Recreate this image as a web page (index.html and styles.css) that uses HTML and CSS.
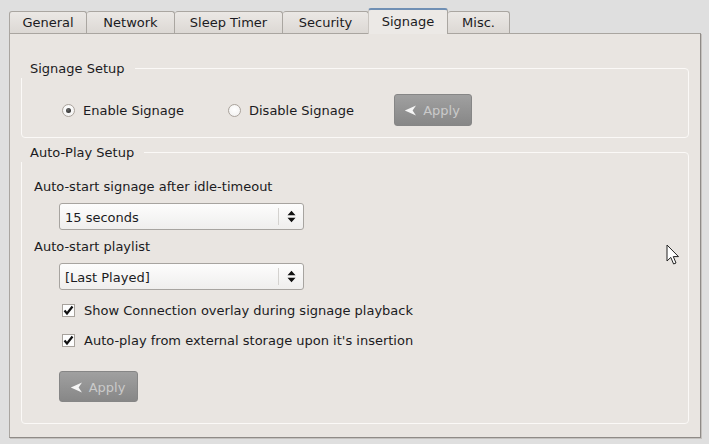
FILE: index.html
```html
<!DOCTYPE html>
<html>
<head>
<meta charset="utf-8">
<link rel="stylesheet" href="styles.css">
</head>
<body>
<div class="window">
  <div class="tabs">
    <div class="tab t-general">General</div>
    <div class="tab t-network">Network</div>
    <div class="tab t-sleep">Sleep Timer</div>
    <div class="tab t-security">Security</div>
    <div class="tab t-signage active">Signage</div>
    <div class="tab t-misc">Misc.</div>
  </div>
  <div class="panel">
    <div class="group g1">
      <div class="gtitle">Signage Setup</div>
      <div class="radio-row">
        <label class="radio r-enable"><span class="rb checked"></span>Enable Signage</label>
        <label class="radio r-disable"><span class="rb"></span>Disable Signage</label>
        <button class="apply apply-top"><svg class="arr" width="13" height="11" viewBox="0 0 13 11"><path d="M12 0.6 L0.8 5.5 L12 10.4 L8.6 5.5 Z" fill="#f6f6f6"/></svg>Apply</button>
      </div>
    </div>
    <div class="group g2">
      <div class="gtitle">Auto-Play Setup</div>
      <div class="flabel l1">Auto-start signage after idle-timeout</div>
      <div class="select s1"><span class="sval">15 seconds</span><span class="sarrow"><svg width="9" height="13" viewBox="0 0 9 13"><path d="M4.5 0.8 L8.5 5.2 L0.5 5.2 Z M0.5 7.8 L8.5 7.8 L4.5 12.2 Z" fill="#111"/></svg></span></div>
      <div class="flabel l2">Auto-start playlist</div>
      <div class="select s2"><span class="sval">[Last Played]</span><span class="sarrow"><svg width="9" height="13" viewBox="0 0 9 13"><path d="M4.5 0.8 L8.5 5.2 L0.5 5.2 Z M0.5 7.8 L8.5 7.8 L4.5 12.2 Z" fill="#111"/></svg></span></div>
      <label class="check c1"><span class="cb"><svg width="11" height="11" viewBox="0 0 11 11"><path d="M1.5 5.5 L4 8.5 L9.5 1.5" stroke="#111" stroke-width="2.2" fill="none"/></svg></span>Show Connection overlay during signage playback</label>
      <label class="check c2"><span class="cb"><svg width="11" height="11" viewBox="0 0 11 11"><path d="M1.5 5.5 L4 8.5 L9.5 1.5" stroke="#111" stroke-width="2.2" fill="none"/></svg></span>Auto-play from external storage upon it's insertion</label>
      <button class="apply apply-bottom"><svg class="arr" width="13" height="11" viewBox="0 0 13 11"><path d="M12 0.6 L0.8 5.5 L12 10.4 L8.6 5.5 Z" fill="#f6f6f6"/></svg>Apply</button>
    </div>
  </div>
  <svg class="cursor" width="14" height="22" viewBox="0 0 14 22"><path d="M1 1 L1 17 L4.8 13.4 L7.6 20 L10 19 L7.3 12.6 L12.5 12.6 Z" fill="#fff" stroke="#222" stroke-width="1"/></svg>
</div>
</body>
</html>
```

FILE: styles.css
```css
html, body {
  margin: 0;
  padding: 0;
  background: #dfdfdf;
}
body {
  font-family: "DejaVu Sans", Verdana, sans-serif;
  font-size: 13px;
  color: #1b1b22;
}
.window {
  width: 709px;
  height: 444px;
  padding: 8px 0 0 9px;
  box-sizing: border-box;
  position: relative;
}
.tabs {
  display: flex;
  align-items: flex-end;
  height: 25px;
  position: relative;
  z-index: 2;
}
.tab {
  height: 22px;
  line-height: 22px;
  box-sizing: border-box;
  text-align: center;
  border: 1px solid #aaa6a1;
  border-bottom: none;
  border-left: none;
  border-radius: 3px 3px 0 0;
  background: linear-gradient(#ebe8e5, #dcd8d4);
}
.t-general { width: 78px; border-left: 1px solid #aaa6a1; }
.t-network { width: 88px; }
.t-sleep { width: 108px; }
.t-security { width: 86px; }
.t-signage { width: 80px; }
.t-misc { width: 62px; }
.tab.active {
  height: 26px;
  line-height: 23px;
  margin-bottom: -1px;
  background: #ece9e6;
  border-top: 2px solid #6f8fb4;
  border-left: 1px solid #c9c5c0;
  border-right: 1px solid #aaa6a1;
  margin-left: -1px;
}
.panel {
  width: 692px;
  height: 405px;
  box-sizing: border-box;
  background: #e9e5e1;
  border: 1px solid #a9a5a0;
  border-right-color: #8f8b87;
  border-bottom-color: #8f8b87;
  box-shadow: 1px 1px 0 #c4c1be;
  padding: 34px 11px 0 11px;
  position: relative;
  z-index: 1;
}
.group {
  border: 1px solid #fbf9f7;
  border-radius: 4px;
}
.gtitle {
  width: fit-content;
  margin: -10px 0 0 -1px;
  padding: 0 10px 0 9px;
  line-height: 19px;
  height: 19px;
  background: #e9e5e1;
}
.g1 {
  height: 70px;
  box-sizing: border-box;
}
.radio-row {
  display: flex;
  align-items: center;
  height: 32px;
  margin-top: 16px;
  padding-left: 40px;
}
.radio {
  display: flex;
  align-items: center;
  line-height: 18px;
  padding-top: 1px;
}
.r-enable { width: 166px; }
.r-disable { width: 166px; }
.rb {
  width: 13px;
  height: 13px;
  box-sizing: border-box;
  border-radius: 50%;
  border: 1px solid #aaa39c;
  background: radial-gradient(circle at 50% 40%, #ffffff, #f0efee);
  margin-right: 8px;
  position: relative;
  flex-shrink: 0;
}
.rb.checked::after {
  content: "";
  position: absolute;
  left: 3px;
  top: 3px;
  width: 5px;
  height: 5px;
  border-radius: 50%;
  background: radial-gradient(circle at 40% 35%, #6a6a6a, #1c1c1c);
}
.apply {
  width: 78px;
  height: 32px;
  box-sizing: border-box;
  border: 1px solid #868686;
  border-radius: 3px;
  background: linear-gradient(#a0a0a0, #878787);
  color: #cacaca;
  font-family: "DejaVu Sans", Verdana, sans-serif;
  font-size: 13px;
  display: flex;
  align-items: center;
  justify-content: center;
  padding: 1px 2px 0 0;
  gap: 6px;
}
.arr { flex-shrink: 0; }
.g2 {
  margin-top: 14px;
  height: 272px;
  box-sizing: border-box;
}
.flabel {
  line-height: 18px;
  height: 18px;
  margin-left: 12px;
}
.l1 { margin-top: 16px; }
.l2 { margin-top: 8px; }
.select {
  width: 245px;
  height: 27px;
  box-sizing: border-box;
  margin: 7px 0 0 37px;
  border: 1px solid #a7a4a0;
  border-radius: 3px;
  background: linear-gradient(#fdfdfd, #efeeed);
  display: flex;
  align-items: center;
}
.s2 { margin-top: 7px; }
.sval {
  flex: 1;
  padding: 1px 0 0 5px;
}
.sarrow {
  width: 24px;
  height: 17px;
  border-left: 1px solid #d4d2cf;
  display: flex;
  align-items: center;
  justify-content: center;
}
.check {
  display: flex;
  align-items: center;
  height: 20px;
  margin-left: 40px;
}
.c1 { margin-top: 10px; }
.c2 { margin-top: 10px; }
.cb {
  width: 13px;
  height: 13px;
  box-sizing: border-box;
  border: 1px solid #a7a29c;
  background: #fdfdfd;
  margin-right: 9px;
  display: flex;
  align-items: center;
  justify-content: center;
  flex-shrink: 0;
}
.apply-bottom {
  margin: 21px 0 0 37px;
  width: 79px;
  height: 31px;
}
.cursor {
  position: absolute;
  left: 666px;
  top: 244px;
  z-index: 5;
}
```
